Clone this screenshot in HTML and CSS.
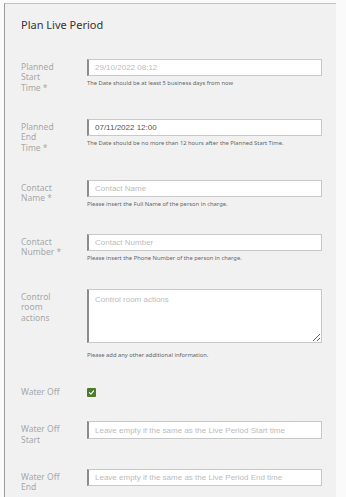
FILE: index.html
```html
<!DOCTYPE html>
<html lang="en">
<head>
    <meta charset="UTF-8">
    <meta name="viewport" content="width=device-width, initial-scale=1.0">
    <title>Plan Live Period</title>
    <link rel="stylesheet" href="styles.css">
</head>
<body>
    <div class="panel">
        <h2 class="panel-title">Plan Live Period</h2>

        <form class="live-form">
            <div class="form-row">
                <label class="form-label" for="start">Planned Start Time&nbsp;*</label>
                <div class="form-field">
                    <input class="form-input" id="start" type="text" placeholder="29/10/2022 08:12">
                    <div class="form-help">The Date should be at least 5 business days from now</div>
                </div>
            </div>

            <div class="form-row row-wide">
                <label class="form-label" for="end">Planned End Time&nbsp;*</label>
                <div class="form-field">
                    <input class="form-input" id="end" type="text" value="07/11/2022 12:00">
                    <div class="form-help">The Date should be no more than 12 hours after the Planned Start Time.</div>
                </div>
            </div>

            <div class="form-row">
                <label class="form-label" for="contact-name">Contact Name&nbsp;*</label>
                <div class="form-field">
                    <input class="form-input" id="contact-name" type="text" placeholder="Contact Name">
                    <div class="form-help">Please insert the Full Name of the person in charge.</div>
                </div>
            </div>

            <div class="form-row row-wide">
                <label class="form-label" for="contact-number">Contact Number&nbsp;*</label>
                <div class="form-field">
                    <input class="form-input" id="contact-number" type="text" placeholder="Contact Number">
                    <div class="form-help">Please insert the Phone Number of the person in charge.</div>
                </div>
            </div>

            <div class="form-row">
                <label class="form-label" for="actions">Control room actions</label>
                <div class="form-field">
                    <textarea class="form-input form-textarea" id="actions" placeholder="Control room actions"></textarea>
                    <div class="form-help help-textarea">Please add any other additional information.</div>
                </div>
            </div>

            <div class="form-row row-tight">
                <label class="form-label" for="water-off">Water&nbsp;Off</label>
                <div class="form-field">
                    <label class="check">
                        <input type="checkbox" id="water-off" checked>
                        <span class="check-box">
                            <svg viewBox="0 0 10 10" width="7" height="7"><path d="M2 5.2 L4.1 7.2 L8 2.8" fill="none" stroke="#fff" stroke-width="1.6" stroke-linecap="round" stroke-linejoin="round"/></svg>
                        </span>
                    </label>
                </div>
            </div>

            <div class="form-row row-tight">
                <label class="form-label" for="water-start">Water&nbsp;Off Start</label>
                <div class="form-field">
                    <input class="form-input" id="water-start" type="text" placeholder="Leave empty if the same as the Live Period Start time">
                </div>
            </div>

            <div class="form-row">
                <label class="form-label" for="water-end">Water&nbsp;Off End</label>
                <div class="form-field">
                    <input class="form-input" id="water-end" type="text" placeholder="Leave empty if the same as the Live Period End time">
                </div>
            </div>
        </form>
    </div>
</body>
</html>
```

FILE: styles.css
```css
body {
    margin: 0;
    padding: 0;
    background-color: #fafafa;
    font-family: "Noto Sans", Arial, sans-serif;
    overflow: hidden;
}

.panel {
    margin: 3px 10px 0 4px;
    padding: 14px 14px 0 16px;
    background-color: #f1f1f1;
    border-top: 1px solid #c2c2c2;
    border-left: 1px solid #9a9a9a;
    min-height: 600px;
}

.panel-title {
    margin: 0 0 27px 0;
    font-size: 11px;
    line-height: 14px;
    font-weight: normal;
    color: #333;
}

.form-row {
    display: flex;
    margin-bottom: 25.5px;
}

.row-wide {
    margin-bottom: 27px;
}

.row-tight {
    margin-bottom: 23.5px;
}

.form-label {
    width: 66px;
    flex-shrink: 0;
    padding: 3px 31px 0 0;
    box-sizing: border-box;
    font-size: 8.5px;
    line-height: 10.4px;
    color: #a8a8a8;
}

.form-field {
    width: 235px;
}

.form-input {
    display: block;
    width: 100%;
    height: 17.4px;
    box-sizing: border-box;
    margin: 0;
    padding: 0 6px;
    border: 1px solid #c9c9c9;
    border-left: 2px solid #8c8c8c;
    border-radius: 0;
    background-color: #fff;
    font-family: "Liberation Sans", Arial, sans-serif;
    font-size: 8px;
    color: #555;
    outline: none;
}

.form-input::placeholder {
    color: #bcbcbc;
}

.form-textarea {
    height: 54.6px;
    padding-top: 5px;
    resize: vertical;
}

.form-help {
    margin-top: 3.8px;
    font-size: 5.8px;
    line-height: 7px;
    color: #666;
    white-space: nowrap;
}

.help-textarea {
    margin-top: 8.5px;
}

.check {
    display: flex;
    padding-top: 4px;
}

.check input {
    display: none;
}

.check-box {
    display: flex;
    align-items: center;
    justify-content: center;
    width: 9px;
    height: 9px;
    background-color: #4d7a2b;
    border-radius: 1px;
}
```
